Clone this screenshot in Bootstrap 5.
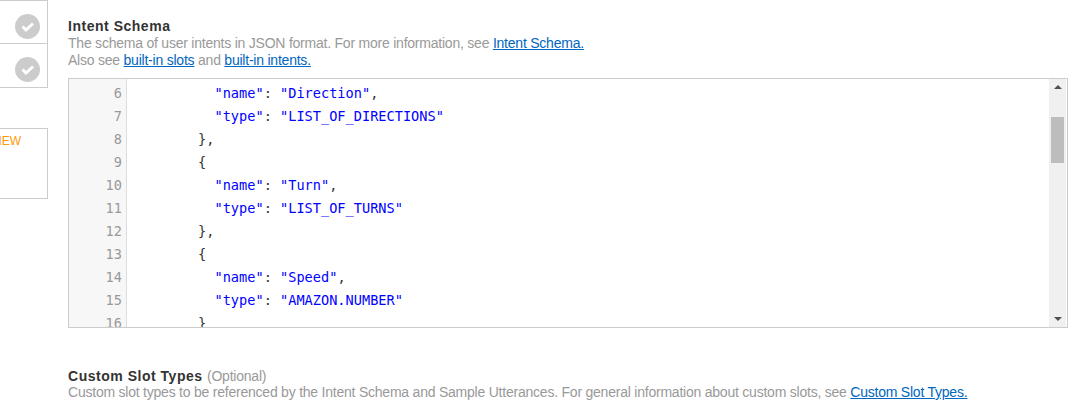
<!doctype html>
<html lang="en">
<head>
<meta charset="utf-8">
<title>Intent Schema</title>
<link href="https://cdn.jsdelivr.net/npm/bootstrap@5.3.0/dist/css/bootstrap.min.css" rel="stylesheet">
<style>
html,body{height:406px;overflow:hidden;background:#fff}
body{font-family:"Liberation Sans",Arial,sans-serif;font-size:14px;letter-spacing:-.225px;line-height:17px;color:#999}
.side-rail{width:48px;flex:none}
.step-box{height:45px;border:1px solid #ccc;border-left:0;margin-top:-1px;padding-top:13px;padding-right:7px}
.step-box:first-child{margin-top:0;height:44px}
.new-box{height:71px;margin-top:40px;border:1px solid #ccc;border-left:0;color:#f90;font-size:12px;letter-spacing:0;line-height:14px;padding-top:5px;overflow:hidden;white-space:nowrap}
.new-box span{display:block;margin-left:-7px}
.main-pane{width:1000px;margin-left:20px;padding-top:17px}
.sec-title{font-size:14px;line-height:18px;font-weight:700;color:#333;letter-spacing:.52px;margin:0}
.sec-title span{font-weight:400;color:#999;letter-spacing:-.225px}
.sec-desc{margin:0;line-height:17px}
.sec-desc a{color:#0066c0}
.code-frame{height:250px;margin-top:9px;border:1px solid #ccc;overflow:hidden}
.line-nos{width:58px;flex:none;background:#f7f7f7;border-right:1px solid #ddd;padding:3px 4px 0 0;text-align:right;color:#999}
.code-body{padding-top:3px;padding-left:5.500px;color:#333;white-space:pre}
.line-nos,.code-body{font-family:"DejaVu Sans Mono","Liberation Mono",monospace;font-size:13.6px;letter-spacing:.01px;line-height:23px;overflow:hidden}
.str{color:#00f}
.scroll-rail{width:17px;flex:none;background:#f0f0f0;margin-right:1px;padding-top:6px}
.scroll-up,.scroll-down{width:0;height:0;border-left:4px solid transparent;border-right:4px solid transparent}
.scroll-up{border-bottom:4px solid #505050}
.scroll-down{border-top:4px solid #505050;margin-bottom:6px}
.scroll-thumb{width:13px;height:46px;background:#bdbdbd;margin:28px auto 0}
.custom-sec{margin-top:39px}
.custom-sec .sec-title{margin-bottom:-1px}
</style>
</head>
<body>
<div class="d-flex">
  <div class="side-rail">
    <div class="step-box d-flex justify-content-end">
      <svg width="25" height="25" viewBox="0 0 25 25"><circle cx="12.5" cy="12.5" r="12.5" fill="#ccc"/><path d="M7.500 12.500l3.500 3.500 7-6.500" fill="none" stroke="#fff" stroke-width="3"/></svg>
    </div>
    <div class="step-box d-flex justify-content-end">
      <svg width="25" height="25" viewBox="0 0 25 25"><circle cx="12.5" cy="12.5" r="12.500" fill="#ccc"/><path d="M7.500 12.500l3.500 3.500 7-6.500" fill="none" stroke="#fff" stroke-width="3"/></svg>
    </div>
    <div class="new-box"><span>NEW</span></div>
  </div>
  <div class="main-pane">
    <h2 class="sec-title">Intent Schema</h2>
    <p class="sec-desc">The schema of user intents in JSON format. For more information, see <a href="#">Intent Schema.</a><br>Also see <a href="#">built-in slots</a> and <a href="#">built-in intents.</a></p>
    <div class="code-frame d-flex">
      <div class="line-nos">6<br>7<br>8<br>9<br>10<br>11<br>12<br>13<br>14<br>15<br>16</div>
      <div class="code-body flex-grow-1">          <span class="str">"name"</span>: <span class="str">"Direction"</span>,
          <span class="str">"type"</span>: <span class="str">"LIST_OF_DIRECTIONS"</span>
        },
        {
          <span class="str">"name"</span>: <span class="str">"Turn"</span>,
          <span class="str">"type"</span>: <span class="str">"LIST_OF_TURNS"</span>
        },
        {
          <span class="str">"name"</span>: <span class="str">"Speed"</span>,
          <span class="str">"type"</span>: <span class="str">"AMAZON.NUMBER"</span>
        }</div>
      <div class="scroll-rail d-flex flex-column align-items-center">
        <div class="scroll-up"></div>
        <div class="scroll-thumb"></div>
        <div class="scroll-down mt-auto"></div>
      </div>
    </div>
    <div class="custom-sec">
      <h2 class="sec-title">Custom Slot Types <span>(Optional)</span></h2>
      <p class="sec-desc">Custom slot types to be referenced by the Intent Schema and Sample Utterances. For general information about custom slots, see <a href="#">Custom Slot Types.</a></p>
    </div>
  </div>
</div>
<script src="https://cdn.jsdelivr.net/npm/bootstrap@5.3.0/dist/js/bootstrap.bundle.min.js"></script>
</body>
</html>
